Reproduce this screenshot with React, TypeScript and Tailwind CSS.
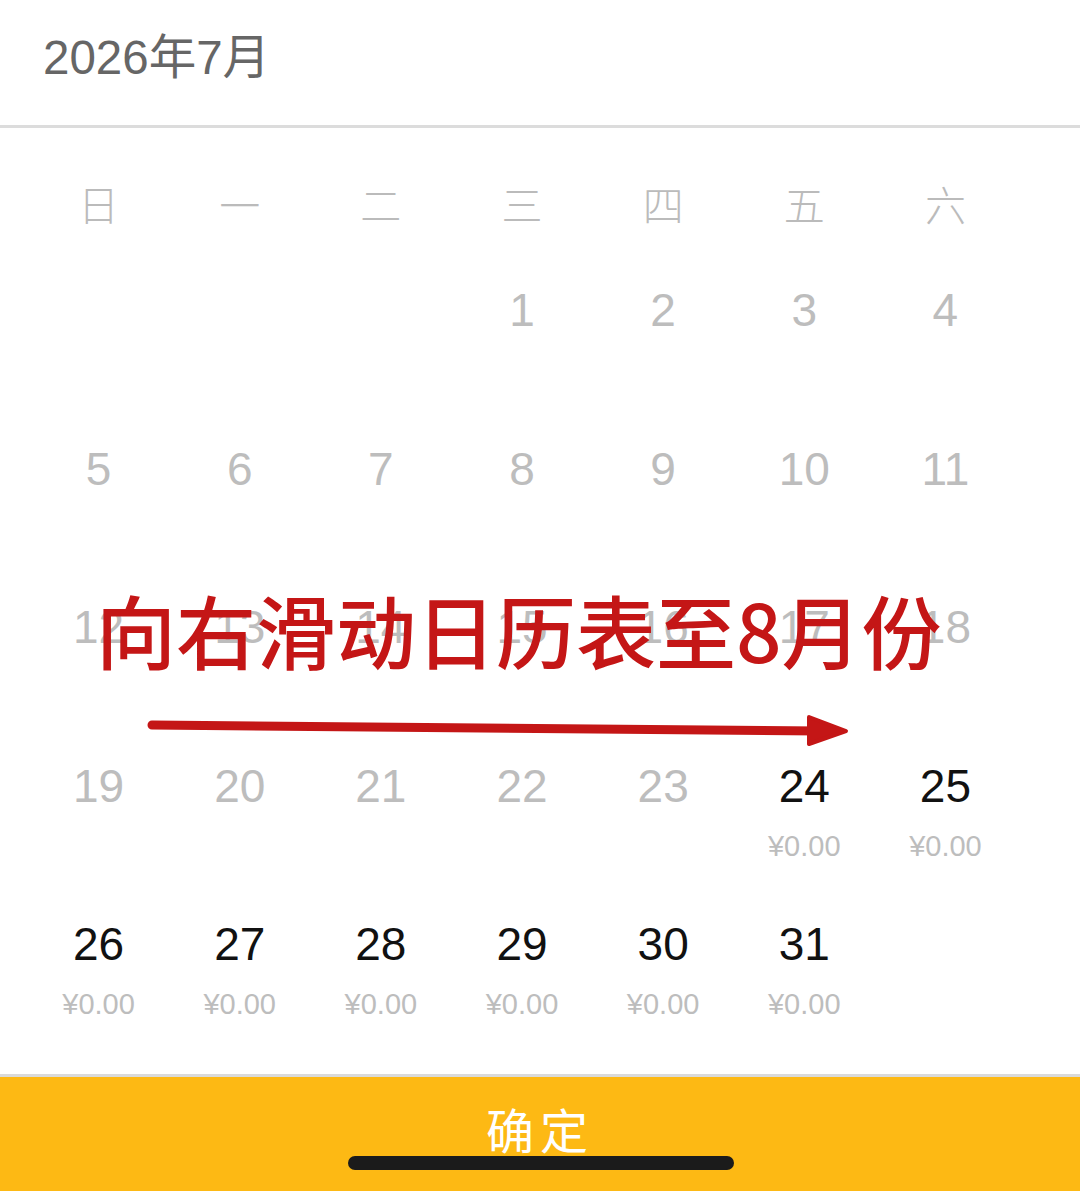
import React from 'react'

const FONT = { fontFamily: '"Liberation Sans", "Noto Sans CJK SC", sans-serif' }

type Cell = { day: number; active: boolean } | null

const weekdays = ['日', '一', '二', '三', '四', '五', '六']

function buildCells(): Cell[] {
  const cells: Cell[] = [null, null, null]
  for (let d = 1; d <= 31; d++) cells.push({ day: d, active: d >= 24 })
  while (cells.length % 7) cells.push(null)
  return cells
}

export default function App() {
  const cells = buildCells()

  return (
    <div className="relative w-[1080px] h-[1191px] bg-white flex flex-col overflow-hidden" style={FONT}>
      {/* Month title */}
      <div className="h-[125px] flex items-center pl-[43px] pb-[10px]">
        <span className="text-[47.5px] leading-none text-[#666666]">2026年7月</span>
      </div>
      <div className="h-[3px] bg-[#dcdcdc]" />

      {/* Weekdays */}
      <div className="grid grid-cols-7 w-[988px] ml-[28px] h-[103px]">
        {weekdays.map(w => (
          <div key={w} className="flex justify-center pt-[56px]">
            <span className="text-[41px] leading-[46px] text-[#bbbbbb] font-light">{w}</span>
          </div>
        ))}
      </div>

      {/* Days */}
      <div className="grid grid-cols-7 w-[988px] ml-[28px] auto-rows-[158.5px]">
        {cells.map((c, i) => (
          <div key={i} className="flex flex-col items-center pt-[56px]">
            {c && (
              <>
                <span
                  className={`text-[46px] leading-[46px] ${c.active ? 'text-[#111111]' : 'text-[#bdbdbd]'}`}
                >
                  {c.day}
                </span>
                {c.active && (
                  <span className="mt-[22px] text-[29px] leading-[30px] text-[#bdbdbd]">¥0.00</span>
                )}
              </>
            )}
          </div>
        ))}
      </div>

      <div className="flex-1" />

      {/* Confirm */}
      <div className="h-[3px] bg-[#dadada]" />
      <div className="h-[114px] bg-[#fdb914] flex justify-center pt-[30px]">
        <span className="text-[48px] leading-[52px] text-white tracking-[6px]">确定</span>
      </div>

      {/* Home indicator */}
      <div className="absolute left-[348px] top-[1156px] w-[386px] h-[14px] rounded-full bg-[#1b1b1b]" />

      {/* Red overlay hint */}
      <div
        className="absolute left-[96px] top-[582px] text-[80px] leading-[92px] font-medium text-[#c41616] whitespace-nowrap"
        style={{ fontFamily: '"Noto Sans CJK SC", "Liberation Sans", sans-serif' }}
      >
        向右滑动日历表至8月份
      </div>
      <svg className="absolute left-[140px] top-[708px]" width="720" height="44" viewBox="0 0 720 44">
        <path d="M12 17 L680 23" stroke="#c41616" strokeWidth="9" strokeLinecap="round" fill="none" />
        <path d="M669 9 L706 23 L669 36 Z" fill="#c41616" stroke="#c41616" strokeWidth="4" strokeLinejoin="round" />
      </svg>
    </div>
  )
}
